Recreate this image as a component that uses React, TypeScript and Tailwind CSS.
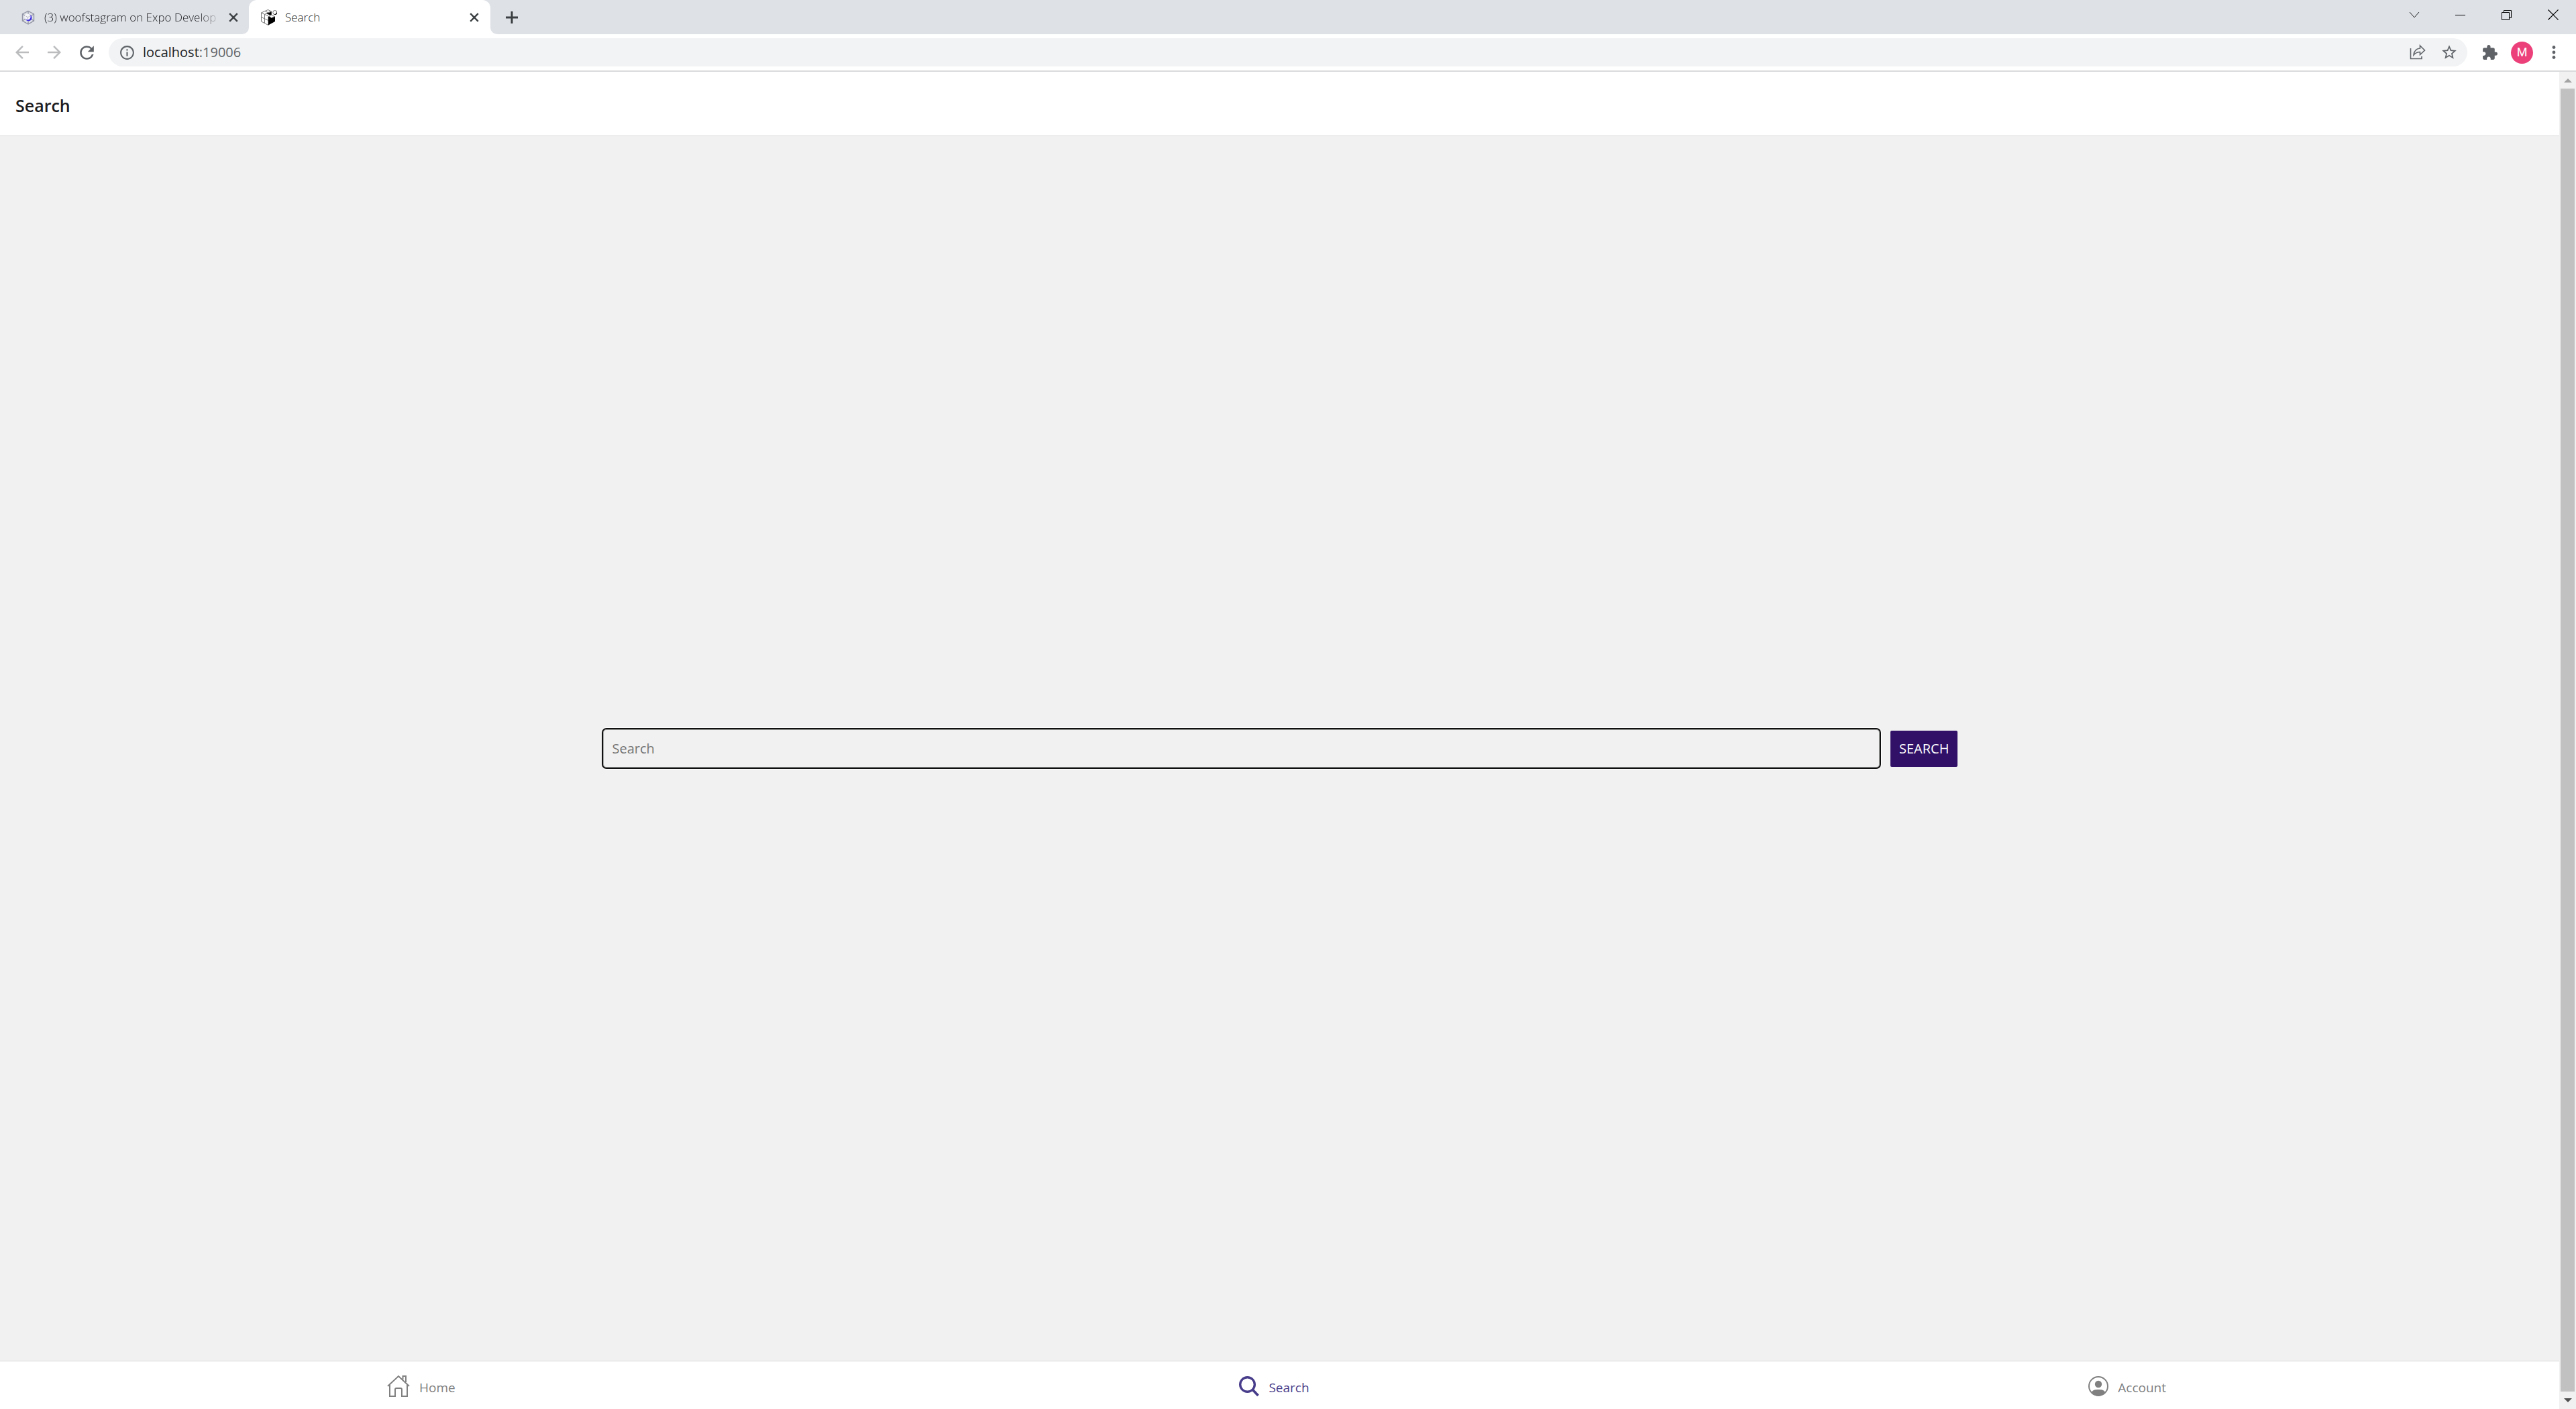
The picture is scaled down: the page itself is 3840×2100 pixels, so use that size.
import React from "react";
import { MdArrowBack, MdArrowForward, MdExtension, MdInfoOutline, MdRefresh, MdStarBorder } from "react-icons/md";

function HexLogo() {
  return (
    <svg width="24" height="24" viewBox="0 0 24 24" fill="none" stroke="#9396a6" strokeWidth="1.4" aria-hidden="true">
      <path d="M12 2.500 20.500 7v10L12 22l-8.500-5V7z" />
      <path d="M12 2.500v6M3.500 7l5 3M20.500 7l-5 3M3.500 17l5-3M20.500 17l-5-3M12 22v-4" />
      <circle cx="12.500" cy="12.500" r="5" fill="#3f2fe0" stroke="none" />
      <circle cx="11" cy="11" r="4.600" fill="#f4f5f8" stroke="none" />
      <path d="M8.500 10l3 1.800 3-1.800M11.500 11.800v3" stroke="#b4b6c4" strokeWidth="1" />
    </svg>
  );
}

function CubeLogo() {
  return (
    <svg width="24" height="24" viewBox="0 0 24 24" fill="none" stroke="#777" strokeWidth="1" aria-hidden="true">
      <path d="M.5 5 10.500.5 15.500 3v6L11 11v12.500L.5 18z" fill="#fff" />
      <path d="M.5 5 11 10M6 2.500l5 2.500M5.500 7.500 11 4.500l4.500-1.500M5.500 7.500v13.500M.5 11.500l10.500 5" />
      <path d="M8 6.500 15.500 3.500v4.500L14 8.500z" fill="#000" stroke="none" />
      <path d="M11 11l2-1 2.500 3 5.500-2.500V18l-10 5.500z" fill="#000" stroke="none" />
      <path d="M12 10l3.500-1.500L20.500 10.500l-5 2z" fill="#fff" />
      <circle cx="20.800" cy="4.500" r="3" fill="#fff" />
      <path d="M24 3a3.500 3.500 0 0 1-5 4.500C22 7.500 23.500 5.500 24 3z" fill="#000" stroke="none" />
    </svg>
  );
}

function CloseX() {
  return (
    <svg width="14" height="14" viewBox="0 0 14 14" stroke="#3c4043" strokeWidth="2.4" aria-hidden="true">
      <path d="M1.200 1.200l11.600 11.600M12.800 1.200L1.200 12.800" />
    </svg>
  );
}

function TabStrip() {
  return (
    <div className="flex h-[51px] shrink-0 bg-[#dee1e6] text-[17px] leading-6 font-light text-[#202124]">
      <div className="flex w-[361px] items-center pr-[6px] pl-[30px]">
        <HexLogo />
        <span className="ml-3 min-w-0 flex-1 overflow-hidden whitespace-nowrap [mask-image:linear-gradient(to_right,#000_88%,transparent)]">
          (3) woofstagram on Expo Develop
        </span>
        <button type="button" aria-label="Close tab" className="ml-3 cursor-default">
          <CloseX />
        </button>
      </div>
      <div className="h-[11px] w-[10px] self-end bg-white">
        <div className="h-full rounded-br-[10px] bg-[#dee1e6]" />
      </div>
      <div className="flex w-[360px] items-center rounded-t-[12px] bg-white pr-[17px] pl-[18px]">
        <CubeLogo />
        <span className="ml-3 flex-1">Search</span>
        <button type="button" aria-label="Close tab" className="cursor-default">
          <CloseX />
        </button>
      </div>
      <div className="h-[11px] w-[10px] self-end bg-white">
        <div className="h-full rounded-bl-[10px] bg-[#dee1e6]" />
      </div>
      <button type="button" aria-label="New tab" className="ml-3 flex w-5 items-center">
        <svg width="20" height="20" viewBox="0 0 20 20" stroke="#3c4043" strokeWidth="3" aria-hidden="true">
          <path d="M10 1v18M1 10h18" />
        </svg>
      </button>
      <div className="ml-auto flex h-[43px] items-center gap-[53px] pr-[26px]">
        <button type="button" aria-label="Search tabs">
          <svg width="16" height="16" viewBox="0 0 16 16" fill="none" stroke="#222" aria-hidden="true">
            <path d="M1 4l7 8 7-8" />
          </svg>
        </button>
        <button type="button" aria-label="Minimize">
          <svg width="16" height="16" viewBox="0 0 16 16" stroke="#000" aria-hidden="true">
            <path d="M0 8.500h15" />
          </svg>
        </button>
        <button type="button" aria-label="Restore">
          <svg width="16" height="16" viewBox="0 0 16 16" fill="none" stroke="#000" aria-hidden="true">
            <path d="M.5 4.500h11v11H.5zM3.500 4.500v-3h11v11h-3" />
          </svg>
        </button>
        <button type="button" aria-label="Close window">
          <svg width="16" height="16" viewBox="0 0 16 16" stroke="#000" strokeWidth="1.2" aria-hidden="true">
            <path d="M.5.5l15 15M15.500.5l-15 15" />
          </svg>
        </button>
      </div>
    </div>
  );
}

function Toolbar() {
  return (
    <div className="flex h-[56px] shrink-0 items-center border-b-2 border-[#dadbdc] bg-white pr-[30px] pl-[18px] text-[#5f6368]">
      <div className="flex gap-[18px]">
        <button type="button" aria-label="Back" className="text-[#babcbe]">
          <MdArrowBack size={30} />
        </button>
        <button type="button" aria-label="Forward" className="text-[#babcbe]">
          <MdArrowForward size={30} />
        </button>
        <button type="button" aria-label="Reload">
          <MdRefresh size={31} />
        </button>
      </div>
      <div className="ml-[17px] flex h-[42px] flex-1 items-center rounded-full bg-[#f1f3f4] pr-[14px] pl-[15px]">
        <MdInfoOutline size={25} />
        <a href="#address" className="ml-[11px] flex-1 text-[20px] leading-7">
          <span className="text-[#202124]">localhost</span>:19006
        </a>
        <button type="button" aria-label="Share">
          <svg width="24" height="24" viewBox="0 0 24 24" fill="none" stroke="#5f6368" strokeWidth="1.6" aria-hidden="true">
            <path d="M1.500 6v15.500h16.500V18" />
            <path d="M15.500 2l7 7-7 6.500v-4c-4.500 0-7 1.500-9.500 4.500.5-5 3.500-9.500 9.500-10z" strokeLinejoin="miter" />
          </svg>
        </button>
        <button type="button" aria-label="Bookmark" className="ml-[22px]">
          <MdStarBorder size={26} />
        </button>
      </div>
      <button type="button" aria-label="Extensions" className="ml-[21px]">
        <MdExtension size={25} />
      </button>
      <button
        type="button"
        aria-label="Profile"
        className="ml-[19px] flex size-[33px] items-center justify-center rounded-full bg-[#ec407a] font-[Roboto,sans-serif] text-[18px] leading-6 text-white"
      >
        M
      </button>
      <button type="button" aria-label="Menu" className="ml-[28px]">
        <svg width="6" height="22" viewBox="0 0 6 22" fill="#5f6368" aria-hidden="true">
          <circle cx="3" cy="3.500" r="2.400" />
          <circle cx="3" cy="11" r="2.400" />
          <circle cx="3" cy="18.500" r="2.400" />
        </svg>
      </button>
    </div>
  );
}

function Scrollbar() {
  return (
    <div aria-hidden="true" className="flex w-[25px] shrink-0 flex-col bg-[#f1f1f1] px-[2px]">
      <div className="flex h-[25px] items-center justify-center">
        <svg width="12" height="6" viewBox="0 0 12 6" fill="#a3a3a3">
          <path d="M6 0l6 6H0z" />
        </svg>
      </div>
      <div className="flex-1 bg-[#c1c1c1]" />
      <div className="flex h-[26px] items-center justify-center">
        <svg width="12" height="6" viewBox="0 0 12 6" fill="#505050">
          <path d="M0 0h12L6 6z" />
        </svg>
      </div>
    </div>
  );
}

function HomeIcon() {
  return (
    <svg width="34" height="34" viewBox="0 0 34 34" fill="none" stroke="currentColor" strokeWidth="2" aria-hidden="true">
      <path d="M1 17L17 2l16 15" />
      <path d="M4 14.500V32h8V22q0-2 2-2h6q2 0 2 2v10h8V14.500" />
      <path d="M23.500 7V2H28v9" />
    </svg>
  );
}

function SearchIcon() {
  return (
    <svg width="30" height="32" viewBox="0 0 30 32" fill="none" stroke="currentColor" strokeWidth="3.400" aria-hidden="true">
      <circle cx="12.500" cy="13.500" r="10.800" />
      <path d="M20.500 21.500l8 8.500" strokeWidth="3.800" />
    </svg>
  );
}

function AccountIcon() {
  return (
    <svg width="30" height="32" viewBox="0 0 30 32" aria-hidden="true">
      <circle cx="15" cy="16" r="14" fill="none" stroke="currentColor" strokeWidth="2" />
      <circle cx="15" cy="13" r="5.200" fill="currentColor" />
      <path d="M5 25c1.500-3.500 5-4 10-4s8.500.5 10 4c-2.500 3.800-6 5.800-10 5.800S7.500 28.800 5 25z" fill="currentColor" />
    </svg>
  );
}

const tabs = [
  { label: "Home", icon: <HomeIcon />, color: "text-[#808080]" },
  { label: "Search", icon: <SearchIcon />, color: "text-[#483d8b]" },
  { label: "Account", icon: <AccountIcon />, color: "text-[#808080]" },
];

export default function App() {
  return (
    <div className="flex h-screen flex-col font-['Open_Sans',sans-serif]">
      <TabStrip />
      <Toolbar />
      <div className="flex min-h-0 flex-1">
        <div className="flex min-w-0 flex-1 flex-col bg-[#f1f1f1]">
          <header className="flex h-24 shrink-0 items-center border-b border-[#d8d8d8] bg-white px-[23px] pt-1">
            <h1 className="text-[25px] leading-8 font-semibold text-[#1c1c1e]">Search</h1>
          </header>
          <main className="flex flex-1 items-center justify-center">
            <input
              type="text"
              aria-label="Search"
              placeholder="Search"
              className="h-[61px] w-1/2 rounded-[7px] border-2 border-[#101010] bg-transparent px-[14px] text-[20px] leading-7 text-black shadow-[0_0_0_1px_#fff,inset_0_0_0_1px_#a0a3a1] outline-none placeholder:text-[#757575]"
            />
            <button
              type="button"
              className="ml-[14px] h-[54px] rounded-[2px] bg-[#301167] px-[13px] text-[20px] leading-7 text-white"
            >
              SEARCH
            </button>
          </main>
          <nav className="flex h-[72px] shrink-0 border-t border-[#d8d8d8] bg-white">
            {tabs.map((t) => (
              <a key={t.label} href="#" className={`flex flex-1 items-center justify-center pt-[3px] pr-4 ${t.color}`}>
                {t.icon}
                <span className="ml-[14px] pt-1 text-[19px] leading-7">{t.label}</span>
              </a>
            ))}
          </nav>
        </div>
        <Scrollbar />
      </div>
    </div>
  );
}
